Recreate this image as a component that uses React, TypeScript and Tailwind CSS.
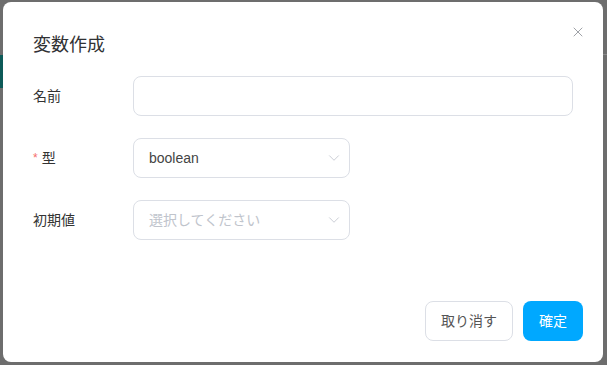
import { ChevronDown, X } from "lucide-react";

const FONT = "font-['Liberation_Sans','Noto_Sans_CJK_JP',sans-serif]";

function FormRow({ label, required, children }: { label: string; required?: boolean; children: React.ReactNode }) {
  return (
    <div className="flex items-center h-[40px]">
      <label className="w-[100px] text-[14px] text-[#333] flex items-center">
        {required && <span className="text-[#f56c6c] mr-[4px] text-[12px]">*</span>}
        {label}
      </label>
      {children}
    </div>
  );
}

function Select({ value, placeholder }: { value?: string; placeholder: string }) {
  return (
    <div className="w-[217px] h-[40px] border border-[#dcdfe6] rounded-[8px] flex items-center justify-between pl-[15px] pr-[6px]">
      <span className={value ? "text-[14px] text-[#444]" : "text-[14px] text-[#c0c4cc]"}>{value || placeholder}</span>
      <ChevronDown className="w-[18px] h-[18px] text-[#c0c4cc]" strokeWidth={1.1} />
    </div>
  );
}

export default function App() {
  return (
    <div className={`w-[607px] h-[365px] bg-[#6d6d6d] relative overflow-hidden ${FONT}`}>
      <div className="absolute left-0 top-[55px] w-[4px] h-[33px] bg-[#0d5a58]" />
      <div className="absolute left-[603px] top-[54px] w-[4px] h-[1px] bg-[#8a8a8a]" />
      <div className="ml-[3px] mt-[2px] w-[600px] h-[360px] bg-white rounded-[8px] relative flex flex-col">
        <button className="absolute right-[17px] top-[22px] text-[#909399]">
          <X className="w-[16px] h-[16px]" strokeWidth={1.3} />
        </button>
        <div className="pt-[31px] px-[30px]">
          <h2 className="text-[18px] leading-[24px] text-[#303133]">変数作成</h2>
        </div>
        <div className="mt-[19px] pl-[30px] pr-[30px] flex flex-col gap-[22px]">
          <FormRow label="名前">
            <div className="w-[440px] h-[40px] border border-[#dcdfe6] rounded-[8px]" />
          </FormRow>
          <FormRow label="型" required>
            <Select value="boolean" placeholder="選択してください" />
          </FormRow>
          <FormRow label="初期値">
            <Select placeholder="選択してください" />
          </FormRow>
        </div>
        <div className="mt-auto flex justify-end gap-[10px] pr-[20px] pb-[21px]">
          <button className="w-[88px] h-[40px] border border-[#dcdfe6] rounded-[8px] text-[14px] text-[#555] bg-white">取り消す</button>
          <button className="w-[60px] h-[40px] rounded-[8px] text-[14px] text-white bg-[#00a8ff]">確定</button>
        </div>
      </div>
    </div>
  );
}
